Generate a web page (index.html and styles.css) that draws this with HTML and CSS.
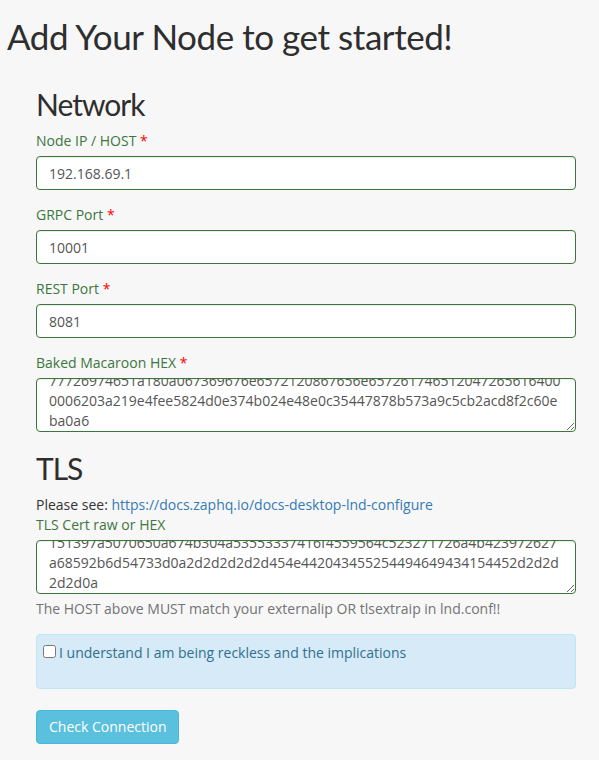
FILE: index.html
```html
<!DOCTYPE html>
<html lang="en">
<head>
<meta charset="utf-8">
<title>Add Your Node</title>
<link rel="stylesheet" href="styles.css">
</head>
<body>
<div class="page">
  <h1 class="title">Add Your Node to get started!</h1>
  <form class="node-form">
    <h2 class="section-title">Network</h2>
    <div class="form-group">
      <label class="field-label">Node IP / HOST <span class="req">*</span></label>
      <input class="field" type="text" value="192.168.69.1">
    </div>
    <div class="form-group">
      <label class="field-label">GRPC Port <span class="req">*</span></label>
      <input class="field" type="text" value="10001">
    </div>
    <div class="form-group">
      <label class="field-label">REST Port <span class="req">*</span></label>
      <input class="field" type="text" value="8081">
    </div>
    <div class="form-group">
      <label class="field-label">Baked Macaroon HEX <span class="req">*</span></label>
      <textarea class="field area" spellcheck="false">0201036c6e6402f801030a10b3bf6906c1937139ac0684ac4417139d1201301a16
0a0761646472657373120472656164120577726974651a130a04696e666f1204
77726974651a180a067369676e6572120867656e657261746512047265616400
0006203a219e4fee5824d0e374b024e48e0c35447878b573a9c5cb2acd8f2c60e
ba0a6</textarea>
    </div>

    <h2 class="section-title tls">TLS</h2>
    <p class="note">Please see: <a class="doc-link" href="#">https://docs.zaphq.io/docs-desktop-lnd-configure</a></p>
    <div class="form-group">
      <label class="field-label">TLS Cert raw or HEX</label>
      <textarea class="field area" spellcheck="false">2d2d2d2d2d424547494e2043455254494649434154452d2d2d2d2d0a4d494943
4a7a4343416332674177494241674952414c4e3470326e7a6c515957366a7134
151397a5070650a674b304a53553337416f4559564c523271726a4b423972627
a68592b6d54733d0a2d2d2d2d2d454e442043455254494649434154452d2d2d
2d2d0a</textarea>
      <p class="help">The HOST above MUST match your externalip OR tlsextraip in lnd.conf!!</p>
    </div>

    <div class="alert">
      <label class="check-label"><input class="check" type="checkbox">I understand I am being reckless and the implications</label>
    </div>

    <button class="btn" type="button">Check Connection</button>
  </form>
</div>
<script src="script.js"></script>
</body>
</html>
```

FILE: styles.css
```css
* { box-sizing: border-box; }

body {
  margin: 0;
  background: #f7f7f7;
  font-family: "Open Sans", "Liberation Sans", sans-serif;
  font-size: 14px;
  line-height: 20px;
  color: #333;
}

.page {
  padding: 16px 23px 20px 7px;
}

.title {
  margin: 0;
  font-family: Lato, "Open Sans", sans-serif;
  font-weight: 400;
  font-size: 35px;
  letter-spacing: -0.45px;
  line-height: 40px;
  color: #2e2e2e;
}

.node-form {
  margin: 32px 0 0 29px;
}

.section-title {
  margin: 0 0 10px;
  font-family: Lato, "Open Sans", sans-serif;
  font-weight: 400;
  font-size: 30px;
  letter-spacing: -1px;
  line-height: 33px;
  color: #2e2e2e;
}

.section-title.tls {
  margin-top: 20px;
}

.form-group {
  margin-bottom: 15px;
}

.field-label {
  display: block;
  margin-bottom: 5px;
  color: #3c763d;
  font-weight: 400;
}

.req {
  color: #f00;
}

.field {
  display: block;
  width: 100%;
  height: 34px;
  padding: 6px 12px;
  font-family: inherit;
  font-size: 14px;
  line-height: 20px;
  color: #555;
  background: #fff;
  border: 1px solid #3c763d;
  border-radius: 4px;
  box-shadow: inset 0 1px 1px rgba(0, 0, 0, 0.075);
  outline: none;
}

.area {
  height: 54px;
  resize: vertical;
  overflow: hidden;
  white-space: pre-wrap;
}

.note {
  margin: 0;
}

.doc-link {
  color: #337ab7;
  text-decoration: none;
}

.help {
  margin: 5px 0 10px;
  color: #737373;
}

.alert {
  padding: 8px 6px 25px;
  background: #d6eaf7;
  border: 1px solid #bce8f1;
  border-radius: 4px;
  color: #31708f;
}

.check-label {
  display: block;
}

.check {
  margin: 0 3px 0 0;
  width: 13px;
  height: 13px;
  vertical-align: baseline;
}

.btn {
  margin-top: 21px;
  padding: 6px 12px;
  font-family: inherit;
  font-size: 14px;
  line-height: 20px;
  color: #fff;
  background: #5bc0de;
  border: 1px solid #46b8da;
  border-radius: 4px;
}
```

FILE: script.js
```js
document.querySelectorAll('textarea.area').forEach(function (t) {
  t.scrollTop = t.scrollHeight - t.clientHeight - 6;
});
```
